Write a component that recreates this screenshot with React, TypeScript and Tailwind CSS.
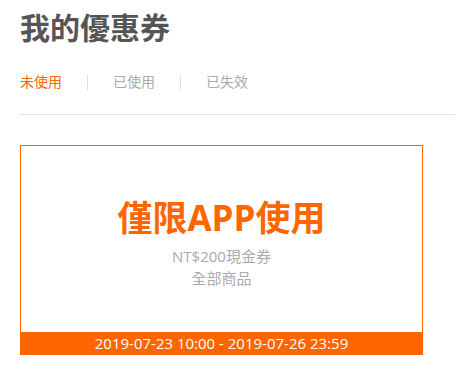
const tabs = ["未使用", "已使用", "已失效"];

export default function App() {
  return (
    <div
      className="min-h-screen bg-white pl-[20px] pt-[8px]"
      style={{ fontFamily: '"Open Sans", "Noto Sans CJK TC", sans-serif' }}
    >
      <h1 className="text-[30px] font-bold leading-[40px] text-[#555]">我的優惠券</h1>

      <div className="mt-[24px] flex items-center text-[14px] leading-[20px]">
        {tabs.map((tab, i) => (
          <div key={tab} className="flex items-center">
            {i > 0 && <span className="mx-[25px] h-[15px] w-px bg-[#ddd]" />}
            <span className={i === 0 ? "text-[#ff6600]" : "text-[#aaa]"}>{tab}</span>
          </div>
        ))}
      </div>

      <div className="mt-[22px] h-px bg-[#e5e5e5]" />

      <div className="mt-[30px] flex h-[210px] w-[403px] flex-col border border-[#ff6600]">
        <div className="flex flex-1 flex-col items-center pt-[52px]">
          <div className="text-[35px] font-bold leading-[40px] text-[#ff6600]">僅限APP使用</div>
          <div className="mt-[7px] text-[15px] leading-[22px] text-[#aaa]">NT$200現金券</div>
          <div className="text-[15px] leading-[22px] text-[#aaa]">全部商品</div>
        </div>
        <div className="h-[22px] bg-[#ff6600] text-center text-[15px] leading-[22px] text-white">
          2019-07-23 10:00 - 2019-07-26 23:59
        </div>
      </div>
    </div>
  );
}
